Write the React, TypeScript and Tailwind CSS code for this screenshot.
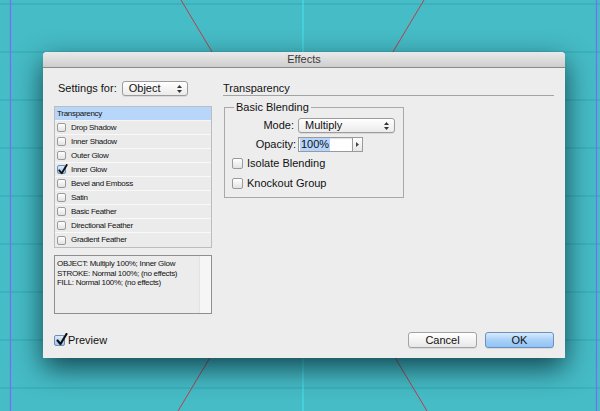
import React from 'react'

// Effects list rows (first row is the selected "Transparency" entry)
const effects = [
  { name: 'Drop Shadow', checked: false },
  { name: 'Inner Shadow', checked: false },
  { name: 'Outer Glow', checked: false },
  { name: 'Inner Glow', checked: true },
  { name: 'Bevel and Emboss', checked: false },
  { name: 'Satin', checked: false },
  { name: 'Basic Feather', checked: false },
  { name: 'Directional Feather', checked: false },
  { name: 'Gradient Feather', checked: false },
]

const CheckMark = ({ small }: { small?: boolean }) => (
  <svg
    className={small ? 'absolute -top-[2px] left-[0px]' : 'absolute -top-[3px] left-[1px]'}
    width={small ? 10 : 12}
    height={small ? 11 : 13}
    viewBox="0 0 12 13"
  >
    <path d="M1.5 7.5 L4.5 11 L10.5 1" fill="none" stroke="#111" strokeWidth="2.2" strokeLinecap="round" strokeLinejoin="round" />
  </svg>
)

const Checkbox = ({ checked = false, small = false }: { checked?: boolean; small?: boolean }) => {
  const size = small ? 'w-[9px] h-[9px]' : 'w-[11px] h-[11px]'
  if (checked) {
    return (
      <div className={`relative shrink-0 ${size} rounded-[2px] border border-[#6c8db8] bg-linear-to-b from-[#dcebfb] to-[#9fc6ef]`}>
        <CheckMark small={small} />
      </div>
    )
  }
  return (
    <div className={`shrink-0 ${size} rounded-[2px] border border-[#9a9a9a] bg-linear-to-b from-white to-[#e2e2e2]`} />
  )
}

const Arrows = () => (
  <svg width="5" height="8" viewBox="0 0 5 8">
    <path d="M2.5 0 L5 3 H0 Z" fill="#333" />
    <path d="M0 5 H5 L2.5 8 Z" fill="#333" />
  </svg>
)

const Select = ({ value, width }: { value: string; width: string }) => (
  <div className={`${width} h-[15px] rounded-[3px] border border-[#9c9c9c] bg-linear-to-b from-white to-[#ebebeb] shadow-[0_1px_0_rgba(0,0,0,0.08)] flex items-center justify-between pl-[6px] pr-[5px] text-[11px] leading-none text-[#111]`}>
    <span>{value}</span>
    <Arrows />
  </div>
)

export default function App() {
  const hLines = [4, 52, 100, 148, 196, 244, 292, 340, 388]

  return (
    <div className="relative w-[600px] h-[411px] overflow-hidden bg-[#46bcc6] font-['Liberation_Sans',Arial,sans-serif]">
      {/* Layout canvas behind the dialog */}
      <svg className="absolute inset-0" width="600" height="411" viewBox="0 0 600 411">
        {hLines.map((y) => (
          <line key={y} x1="0" x2="600" y1={y} y2={y} stroke="#3bb2bd" strokeWidth="2" />
        ))}
        <line x1="10.5" x2="10.5" y1="0" y2="411" stroke="#7b6cf2" strokeWidth="1.2" />
        <line x1="596.5" x2="596.5" y1="0" y2="411" stroke="#7b6cf2" strokeWidth="1.2" />
        <line x1="303" x2="303" y1="0" y2="411" stroke="#46e4ee" strokeWidth="1" />
        <line x1="181" y1="0" x2="427" y2="411" stroke="#b8404c" strokeWidth="1" />
        <line x1="424" y1="0" x2="178" y2="411" stroke="#b8404c" strokeWidth="1" />
      </svg>

      {/* Dialog window */}
      <div className="absolute left-[43px] top-[52px] w-[522px] h-[306px] bg-[#ededed] rounded-t-[4px] shadow-[0_10px_28px_rgba(0,30,40,0.75)] flex flex-col text-[#111]">
        <div className="h-[16px] shrink-0 rounded-t-[4px] bg-linear-to-b from-[#eaeaea] to-[#cecece] border-b border-[#8a8a8a] flex items-center justify-center text-[11px] text-[#3a3a3a]">
          Effects
        </div>

        <div className="flex-1 flex flex-col px-[11px]">
          <div className="flex h-[246px]">
            {/* Left column */}
            <div className="w-[158px] flex flex-col">
              <div className="mt-[13px] h-[15px] flex items-center">
                <span className="ml-[4px] text-[11px]">Settings for:</span>
                <div className="ml-[5px]">
                  <Select value="Object" width="w-[66px]" />
                </div>
              </div>

              <div className="mt-[10px] border border-[#bdbdbd] flex flex-col">
                <div className="h-[14px] flex items-center bg-[#b8d5fa] border-b border-[#f6f6f6] pl-[2px] text-[8px] tracking-[-0.3px]">
                  Transparency
                </div>
                {effects.map((e, i) => (
                  <div
                    key={e.name}
                    className={`h-[14px] flex items-center bg-[#ebebeb] pl-[2px] ${i < effects.length - 1 ? 'border-b border-[#f8f8f8]' : ''}`}
                  >
                    <Checkbox checked={e.checked} small />
                    <span className="ml-[5px] text-[8px] tracking-[-0.3px]">{e.name}</span>
                  </div>
                ))}
              </div>

              <div className="mt-[7px] h-[59px] border border-[#8f8f8f] bg-[#ececec] flex">
                <div className="flex-1 pl-[2px] pt-[3px] text-[8px] leading-[9.5px] tracking-[-0.3px]">
                  <div>OBJECT: Multiply 100%; Inner Glow</div>
                  <div>STROKE: Normal 100%; (no effects)</div>
                  <div>FILL: Normal 100%; (no effects)</div>
                </div>
                <div className="w-[12px] bg-[#f6f6f6] border-l border-[#e2e2e2]" />
              </div>
            </div>

            {/* Right column */}
            <div className="ml-[11px] flex-1 flex flex-col">
              <div className="mt-[13px] h-[15px] border-b border-[#a3a3a3] text-[11px] leading-[14px]">
                Transparency
              </div>

              <div className="relative mt-[11px] ml-[1px] w-[180px] h-[91px] border border-[#a9a9a9] flex flex-col">
                <span className="absolute -top-[8px] left-[9px] px-[2px] bg-[#ededed] text-[11px] leading-[14px]">
                  Basic Blending
                </span>

                <div className="mt-[10px] h-[15px] flex items-center">
                  <span className="w-[69px] text-right text-[11px]">Mode:</span>
                  <div className="ml-[4px]">
                    <Select value="Multiply" width="w-[97px]" />
                  </div>
                </div>

                <div className="mt-[4px] h-[15px] flex items-center">
                  <span className="w-[71px] text-right text-[11px]">Opacity:</span>
                  <div className="ml-[2px] flex h-[15px]">
                    <div className="w-[55px] h-full border border-[#9a9a9a] bg-white flex items-center pl-[1px] shadow-[inset_0_1px_1px_rgba(0,0,0,0.12)]">
                      <span className="bg-[#b5d5ff] text-[11px] leading-[13px] px-[1px]">100%</span>
                    </div>
                    <div className="w-[10px] h-full border border-l-0 border-[#9a9a9a] bg-linear-to-b from-white to-[#e6e6e6] flex items-center justify-center">
                      <svg width="3" height="5" viewBox="0 0 3 5">
                        <path d="M0 0 L3 2.5 L0 5 Z" fill="#444" />
                      </svg>
                    </div>
                  </div>
                </div>

                <div className="mt-[1px] h-[20px] flex items-center pl-[7px]">
                  <Checkbox />
                  <span className="ml-[4px] text-[11px]">Isolate Blending</span>
                </div>
                <div className="h-[20px] flex items-center pl-[7px]">
                  <Checkbox />
                  <span className="ml-[4px] text-[11px]">Knockout Group</span>
                </div>
              </div>
            </div>
          </div>

          {/* Bottom row */}
          <div className="mt-[18px] h-[16px] flex items-center justify-between">
            <div className="flex items-center">
              <Checkbox checked />
              <span className="ml-[3px] text-[11px]">Preview</span>
            </div>
            <div className="flex items-center gap-[8px]">
              <button className="w-[69px] h-[16px] rounded-[3px] border border-[#a3a3a3] bg-linear-to-b from-white to-[#e8e8e8] shadow-[0_1px_0_rgba(0,0,0,0.08)] text-[11px] leading-none">
                Cancel
              </button>
              <button className="w-[69px] h-[16px] rounded-[3px] border border-[#6f8fbf] bg-linear-to-b from-[#d8ebfd] via-[#a9d0f7] to-[#8fc4f6] shadow-[0_1px_0_rgba(0,0,0,0.08)] text-[11px] leading-none">
                OK
              </button>
            </div>
          </div>
        </div>
      </div>
    </div>
  )
}
